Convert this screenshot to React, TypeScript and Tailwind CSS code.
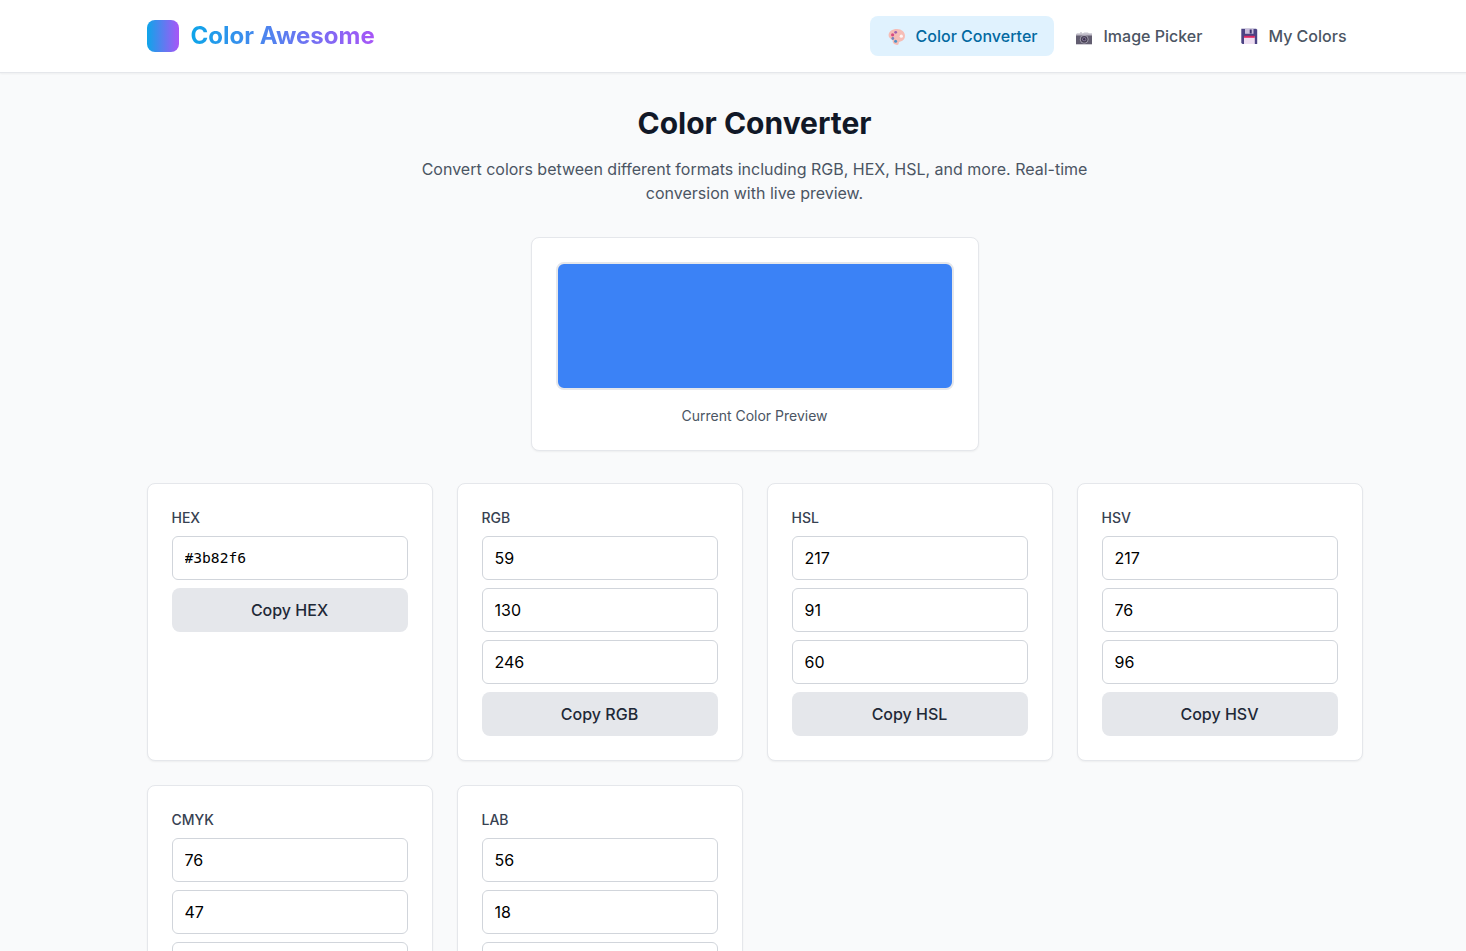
import React from 'react';

function PaletteIcon() {
  return (
    <svg width="22" height="24" viewBox="0 0 22 24" className="mr-2 shrink-0">
      <path d="M11 4.900C6 4.900 2.600 7.600 2.600 11.200c0 2.200 1.500 3.400 3.400 4.200.9.5.6 1.400.7 2.300.2 1.800 2.200 3 4.200 3.200 1.400.1 1.700-.6 1.800-1.600.1-1 .7-1.600 1.800-1.800 2.700-.5 4.500-2.600 4.500-5.700 0-4-3.400-6.900-8-6.900Z" fill="#f6bdb6" />
      <circle cx="15.300" cy="12.200" r="1.600" fill="#fff5f3" />
      <circle cx="9.700" cy="8.300" r="1.400" fill="#9f5fae" />
      <circle cx="6.600" cy="10.800" r="1.600" fill="#d84b83" />
      <circle cx="6.800" cy="14.500" r="1.400" fill="#7583bd" />
      <circle cx="9.600" cy="17.200" r="1.500" fill="#4e92c8" />
    </svg>
  );
}

function CameraIcon() {
  return (
    <svg width="22" height="24" viewBox="-1 0 22 24" className="mr-2 shrink-0">
      <g transform="translate(0 0.8)">
        <path d="M3 8.500h3v-1h2v1h1l1.200-.8h3.600l1.200.8h3v3H2V9.500Z" fill="#c8c6d0" />
        <path d="M2 10.500h16v9H2Z" fill="#625d70" />
        <path d="M2 10.300h16" stroke="#a6a1ae" strokeWidth="0.7" />
        <circle cx="10.200" cy="14.500" r="4.300" fill="#aaa5b5" />
        <circle cx="10.200" cy="14.500" r="3.400" fill="#464053" />
        <circle cx="10.200" cy="14.500" r="2" fill="#8e80a4" />
        <circle cx="10.200" cy="14.500" r="1.200" fill="#393048" />
      </g>
    </svg>
  );
}

function FloppyIcon() {
  return (
    <svg width="22" height="24" viewBox="-1 0 22 24" className="mr-2 shrink-0">
      <path d="M2.300 4.800H17.200l1 1v14.200H3.500l-1.200-1Z" fill="#4c4384" />
      <path d="M6 4.800h8.500v5H6Z" fill="#c9bedc" />
      <path d="M10.700 5.500h2v4h-2Z" fill="#3c356e" />
      <path d="M5 12.300h10.800v7.700H5Z" fill="#efdff2" />
      <path d="M5 11.800h10.800v2H5Z" fill="#dc2862" />
    </svg>
  );
}

const navItems = [
  { label: 'Color Converter', Icon: PaletteIcon, active: true },
  { label: 'Image Picker', Icon: CameraIcon, active: false },
  { label: 'My Colors', Icon: FloppyIcon, active: false },
];

const formats = [
  { name: 'HEX', values: ['#3b82f6'] },
  { name: 'RGB', values: ['59', '130', '246'] },
  { name: 'HSL', values: ['217', '91', '60'] },
  { name: 'HSV', values: ['217', '76', '96'] },
  { name: 'CMYK', values: ['76', '47', '0', '4'] },
  { name: 'LAB', values: ['56', '18', '-66'] },
];

function FormatCard({ name, values }: { name: string; values: string[] }) {
  const mono = name === 'HEX';
  return (
    <section className="rounded-lg border border-[#e5e7eb] bg-white p-6 shadow-[0_1px_2px_rgba(0,0,0,0.05)]">
      <label className="mb-2 block text-sm font-medium text-[#374151]">{name}</label>
      <div className="flex flex-col gap-2">
        {values.map((value, i) => (
          <input
            key={i}
            type="text"
            defaultValue={value}
            className={`h-11 w-full rounded-md border border-[#d1d5db] bg-white px-3 text-black outline-none ${
              mono ? "pb-0.5 font-['DejaVu_Sans_Mono',monospace] text-[14.6px]" : 'text-base'
            }`}
          />
        ))}
        <button className="h-11 w-full rounded-lg bg-[#e5e7eb] text-base font-medium text-[#1f2937]">
          Copy {name}
        </button>
      </div>
    </section>
  );
}

export default function App() {
  return (
    <div className="h-screen w-full overflow-hidden bg-[#f9fafb] font-['Inter',sans-serif] text-base">
      <div className="w-[1509px]">
        <header className="border-b border-[#e5e7eb] bg-white shadow-[0_1px_2px_rgba(0,0,0,0.05)]">
          <div className="mx-auto flex h-[72px] max-w-7xl items-center justify-between px-8">
            <div className="flex items-center gap-3">
              <div className="size-8 rounded-lg bg-[linear-gradient(to_right,#0ea5e9,#a855f7)]" />
              <span className="bg-[linear-gradient(to_right,#0ea5e9,#a855f7)] bg-clip-text text-2xl font-bold text-transparent">
                Color Awesome
              </span>
            </div>
            <nav className="flex gap-1">
              {navItems.map(({ label, Icon, active }) => (
                <button
                  key={label}
                  className={`flex items-center rounded-lg py-2 pl-4 font-medium ${
                    active ? '-mr-[0.5px] bg-[#e0f2fe] pr-[16.5px] text-[#0369a1]' : 'pr-4 text-[#4b5563]'
                  }`}
                >
                  <Icon />
                  {label}
                </button>
              ))}
            </nav>
          </div>
        </header>
        <main className="mx-auto max-w-7xl px-8 py-8">
          <div className="mb-8 text-center">
            <h1 className="mb-4 text-3xl font-bold text-[#111827]">Color Converter</h1>
            <p className="mx-auto max-w-2xl text-[#4b5563]">
              Convert colors between different formats including RGB, HEX, HSL, and more. Real-time conversion with live
              preview.
            </p>
          </div>
          <section className="mx-auto mb-8 max-w-md rounded-lg border border-[#e5e7eb] bg-white p-6 shadow-[0_1px_2px_rgba(0,0,0,0.05)]">
            <div className="mb-4 h-32 rounded-lg border-2 border-[#e5e7eb] bg-[#3b82f6]" />
            <p className="text-center text-sm text-[#4b5563]">Current Color Preview</p>
          </section>
          <div className="grid grid-cols-4 gap-6">
            {formats.map((format) => (
              <FormatCard key={format.name} {...format} />
            ))}
          </div>
        </main>
      </div>
    </div>
  );
}
